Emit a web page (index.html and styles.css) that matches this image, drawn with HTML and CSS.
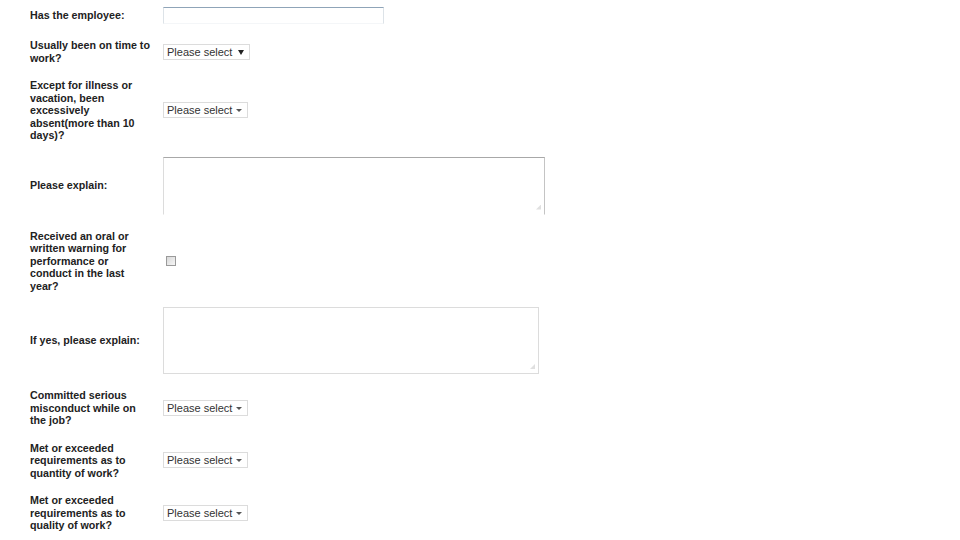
FILE: index.html
```html
<!DOCTYPE html>
<html lang="en">
  <head>
    <meta charset="UTF-8" />
    <meta name="viewport" content="width=device-width, initial-scale=1.0" />
    <title>Employee reference</title>
    <link rel="stylesheet" href="styles.css">
  </head>
  <body>
    <form class="ref-form" action="">
      <div class="row row-1">
        <label for="employee">Has the employee:</label>
        <input type="text" id="employee" name="employee" class="text-in" />
      </div>

      <div class="row row-2">
        <label for="on_time">Usually been on time to work?</label>
        <span class="sel sel-dark">
          <select id="on_time" name="on_time">
            <option>Please select</option>
            <option>Yes</option>
            <option>No</option>
          </select>
        </span>
      </div>

      <div class="row row-5">
        <label for="absent">Except for illness or vacation, been excessively absent(more than 10 days)?</label>
        <span class="sel">
          <select id="absent" name="absent">
            <option>Please select</option>
            <option>Yes</option>
            <option>No</option>
          </select>
        </span>
      </div>

      <div class="row">
        <label for="explain">Please explain:</label>
        <span class="area-wrap">
          <textarea id="explain" name="explain" class="area area-1"></textarea>
        </span>
      </div>

      <div class="row row-5">
        <label for="warning">Received an oral or written warning for performance or conduct in the last year?</label>
        <input type="checkbox" id="warning" name="warning" class="check" />
      </div>

      <div class="row">
        <label for="explain_yes">If yes, please explain:</label>
        <span class="area-wrap">
          <textarea id="explain_yes" name="explain_yes" class="area area-2"></textarea>
        </span>
      </div>

      <div class="row row-3">
        <label for="misconduct">Committed serious misconduct while on the job?</label>
        <span class="sel">
          <select id="misconduct" name="misconduct">
            <option>Please select</option>
            <option>Yes</option>
            <option>No</option>
          </select>
        </span>
      </div>

      <div class="row row-3">
        <label for="quantity">Met or exceeded requirements as to quantity of work?</label>
        <span class="sel">
          <select id="quantity" name="quantity">
            <option>Please select</option>
            <option>Yes</option>
            <option>No</option>
          </select>
        </span>
      </div>

      <div class="row row-3">
        <label for="quality">Met or exceeded requirements as to quality of work?</label>
        <span class="sel">
          <select id="quality" name="quality">
            <option>Please select</option>
            <option>Yes</option>
            <option>No</option>
          </select>
        </span>
      </div>
    </form>
  </body>
</html>
```

FILE: styles.css
```css
* {
  margin: 0;
  padding: 0;
  box-sizing: border-box;
}

body {
  background: #fff;
  font-family: "Liberation Sans", Arial, sans-serif;
  color: #1e1e1e;
}

.ref-form {
  display: flex;
  flex-direction: column;
  gap: 15px;
  padding: 7px 0 0 30px;
}

.row {
  display: flex;
  align-items: center;
}
.row > label {
  width: 133px;
  padding-right: 12px;
  font-size: 10.7px;
  line-height: 12.5px;
  font-weight: bold;
  color: #222;
}

.row-1 {
  height: 17px;
}
.row-2 {
  min-height: 25px;
}
.row-3 {
  min-height: 37.5px;
}
.row-5 {
  min-height: 62.5px;
}

.text-in {
  width: 221px;
  height: 17px;
  border: 1px solid #dde3e8;
  border-top-color: #8fa4b8;
  border-bottom-color: #f4f6f8;
  outline: none;
}

.sel {
  position: relative;
  display: flex;
}
.sel select {
  appearance: none;
  -webkit-appearance: none;
  display: block;
  width: 85px;
  height: 16px;
  padding: 0 14px 0 3px;
  border: 1px solid #dcdcdc;
  background: #fff;
  font-family: "Liberation Sans", Arial, sans-serif;
  font-size: 11px;
  line-height: 14px;
  color: #333;
  outline: none;
}
.sel::after {
  content: "";
  position: absolute;
  right: 6px;
  top: 7px;
  border-left: 3px solid transparent;
  border-right: 3px solid transparent;
  border-top: 3px solid #555;
  pointer-events: none;
}
.sel-dark select {
  width: 87px;
}
.sel-dark::after {
  right: 6px;
  top: 6px;
  border-left-width: 3.5px;
  border-right-width: 3.5px;
  border-top: 5px solid #222;
}

.area-wrap {
  position: relative;
  display: flex;
}
.area-wrap::after {
  content: "";
  position: absolute;
  right: 4px;
  bottom: 5px;
  width: 5px;
  height: 5px;
  background: radial-gradient(circle, #bbb 0.6px, transparent 0.8px) 0 0 / 2px 2px;
  clip-path: polygon(100% 0, 100% 100%, 0 100%);
  pointer-events: none;
}
.area {
  display: block;
  resize: none;
  border: 1px solid #dcdcdc;
  outline: none;
  font-family: "Liberation Sans", Arial, sans-serif;
  font-size: 11px;
}
.area-1 {
  width: 382px;
  height: 58px;
  border-top-color: #a8a8a8;
  border-right-color: #c4c4c4;
  border-bottom-color: #fff;
}
.area-2 {
  width: 376px;
  height: 67px;
}

.check {
  appearance: none;
  -webkit-appearance: none;
  width: 10px;
  height: 10px;
  margin-left: 3px;
  border: 1px solid #9a9a9a;
  background: linear-gradient(135deg, #d8d8d8, #f6f6f6);
}
```
